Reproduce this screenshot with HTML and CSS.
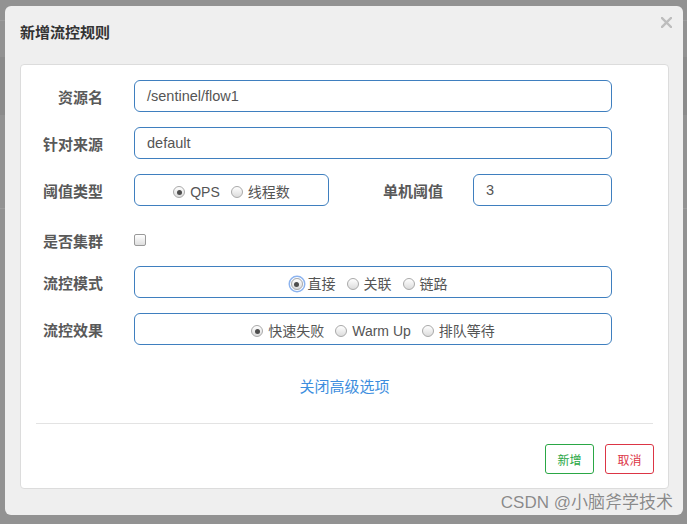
FILE: index.html
```html
<!DOCTYPE html>
<html lang="zh-CN">
<head>
<meta charset="utf-8">
<title>新增流控规则</title>
<link rel="stylesheet" href="styles.css">
</head>
<body>
<div class="modal">
  <div class="modal-header">
    <h4 class="modal-title">新增流控规则</h4>
    <span class="close" aria-label="关闭">
      <svg width="11" height="11" viewBox="0 0 11 11"><path d="M1 1 L10 10 M10 1 L1 10" stroke="#bdbdbd" stroke-width="2.4" stroke-linecap="square" fill="none"/></svg>
    </span>
  </div>
  <div class="panel">
    <div class="form">
      <div class="row">
        <label class="label">资源名</label>
        <div class="input">/sentinel/flow1</div>
      </div>
      <div class="row">
        <label class="label">针对来源</label>
        <div class="input">default</div>
      </div>
      <div class="row row-split">
        <label class="label">阈值类型</label>
        <div class="radio-box">
          <span class="opt"><span class="radio checked"></span>QPS</span>
          <span class="opt"><span class="radio"></span>线程数</span>
        </div>
        <label class="label">单机阈值</label>
        <div class="input">3</div>
      </div>
      <div class="row row-check">
        <label class="label">是否集群</label>
        <div><span class="checkbox"></span></div>
      </div>
      <div class="row">
        <label class="label">流控模式</label>
        <div class="radio-box shift">
          <span class="opt"><span class="radio checked focus"></span>直接</span>
          <span class="opt"><span class="radio"></span>关联</span>
          <span class="opt"><span class="radio"></span>链路</span>
        </div>
      </div>
      <div class="row">
        <label class="label">流控效果</label>
        <div class="radio-box">
          <span class="opt"><span class="radio checked"></span>快速失败</span>
          <span class="opt"><span class="radio"></span>Warm Up</span>
          <span class="opt"><span class="radio"></span>排队等待</span>
        </div>
      </div>
    </div>
    <div class="advanced"><a class="link">关闭高级选项</a></div>
    <div class="divider"></div>
    <div class="footer">
      <button class="btn btn-add">新增</button>
      <button class="btn btn-cancel">取消</button>
    </div>
  </div>
  <div class="watermark">CSDN @小脑斧学技术</div>
</div>
</body>
</html>
```
FILE: styles.css
```css
html, body {
  margin: 0;
  padding: 0;
}
body {
  width: 687px;
  height: 524px;
  overflow: hidden;
  background-color: #929292;
  background-image:
    linear-gradient(to bottom, transparent 20px, #9c9c9c 20px, #9c9c9c 21px, transparent 21px),
    linear-gradient(to bottom, transparent 57px, #8b8b8b 57px, #8b8b8b 115px, transparent 115px),
    linear-gradient(to bottom, transparent 208px, #9c9c9c 208px, #9c9c9c 209px, transparent 209px);
  font-family: "Liberation Sans", "Noto Sans CJK SC", sans-serif;
  color: #555;
}
.modal {
  position: relative;
  margin: 6px 4px 0 5px;
  width: 678px;
  height: 509px;
  background: #efefef;
  border-radius: 6px;
  box-sizing: border-box;
}
.modal-header {
  padding: 16px 15px 22px;
}
.modal-title {
  margin: 0;
  font-size: 15px;
  line-height: 20px;
  font-weight: bold;
  color: #333;
  font-family: "Noto Sans CJK SC", sans-serif;
}
.close {
  position: absolute;
  top: 11px;
  right: 11px;
  width: 11px;
  height: 11px;
  display: block;
}
.close svg { display: block; }
.panel {
  margin: 0 14px 0 15px;
  background: #fff;
  border: 1px solid #dcdcdc;
  border-radius: 4px;
}
.form {
  padding: 15px 56px 0 15px;
  display: flex;
  flex-direction: column;
  gap: 15px;
}
.row {
  display: grid;
  grid-template-columns: 67px 1fr;
  column-gap: 31px;
  align-items: center;
  height: 32px;
}
.row-split {
  grid-template-columns: 67px 195px 114px 139px;
  column-gap: 0;
}
.row-split > .label:first-child { margin-right: 31px; }
.row-split > .label:nth-child(3) { margin-right: 30px; }
.row-split { grid-template-columns: 98px 195px 144px 139px; }
.row-check {
  height: 23px;
  padding-top: 7px;
}
.label {
  text-align: right;
  font-size: 15px;
  font-weight: bold;
  color: #595959;
  line-height: 20px;
  padding-top: 2px;
  font-family: "Noto Sans CJK SC", sans-serif;
  white-space: nowrap;
}
.input {
  height: 32px;
  box-sizing: border-box;
  border: 1px solid #3f7fbf;
  border-radius: 6px;
  padding: 0 12px;
  font-size: 14.5px;
  line-height: 30px;
  color: #555;
}
.radio-box {
  height: 32px;
  box-sizing: border-box;
  border: 1px solid #3f7fbf;
  border-radius: 6px;
  padding-top: 4px;
  display: flex;
  justify-content: center;
  align-items: center;
  gap: 11px;
  font-size: 14px;
  color: #555;
}
.radio-box.shift { padding-right: 8px; }
.opt {
  display: inline-flex;
  align-items: center;
  white-space: nowrap;
  line-height: 20px;
}
.radio {
  position: relative;
  width: 12px;
  height: 12px;
  box-sizing: border-box;
  border-radius: 50%;
  border: 1px solid #a9a9a9;
  background: linear-gradient(#ffffff, #dcdcdc);
  margin-right: 5px;
  flex: none;
}
.radio.checked::after {
  content: "";
  position: absolute;
  left: 2.5px;
  top: 2.5px;
  width: 5px;
  height: 5px;
  border-radius: 50%;
  background: #4d4d4d;
}
.radio.focus {
  box-shadow: 0 0 0 1px #fff, 0 0 0 2.5px #8cb3ee;
}
.checkbox {
  display: block;
  width: 12px;
  height: 12px;
  box-sizing: border-box;
  border: 1px solid #9a9a9a;
  border-radius: 2px;
  background: linear-gradient(#ffffff, #dedede);
}
.advanced {
  margin-top: 31px;
  text-align: center;
  line-height: 20px;
}
.link {
  font-size: 15px;
  color: #3d8ede;
  font-family: "Noto Sans CJK SC", sans-serif;
  cursor: pointer;
}
.divider {
  margin: 26px 15px 0;
  height: 1px;
  background: #e3e3e3;
}
.footer {
  display: flex;
  justify-content: flex-end;
  gap: 11px;
  padding: 20px 14px 14px;
}
.btn {
  width: 49px;
  height: 30px;
  box-sizing: border-box;
  background: #fff;
  border-radius: 3px;
  font-size: 12px;
  font-family: "Noto Sans CJK SC", sans-serif;
  padding: 0;
  cursor: pointer;
}
.btn-add {
  border: 1px solid #2aa745;
  color: #2aa745;
}
.btn-cancel {
  border: 1px solid #dc3545;
  color: #dc3545;
}
.watermark {
  position: absolute;
  right: 10px;
  bottom: 1px;
  font-size: 17px;
  color: #8a8a8a;
  font-family: "Liberation Sans", "Noto Sans CJK SC", sans-serif;
  text-shadow: 0 0 1px #fff;
  line-height: 22px;
}
```
